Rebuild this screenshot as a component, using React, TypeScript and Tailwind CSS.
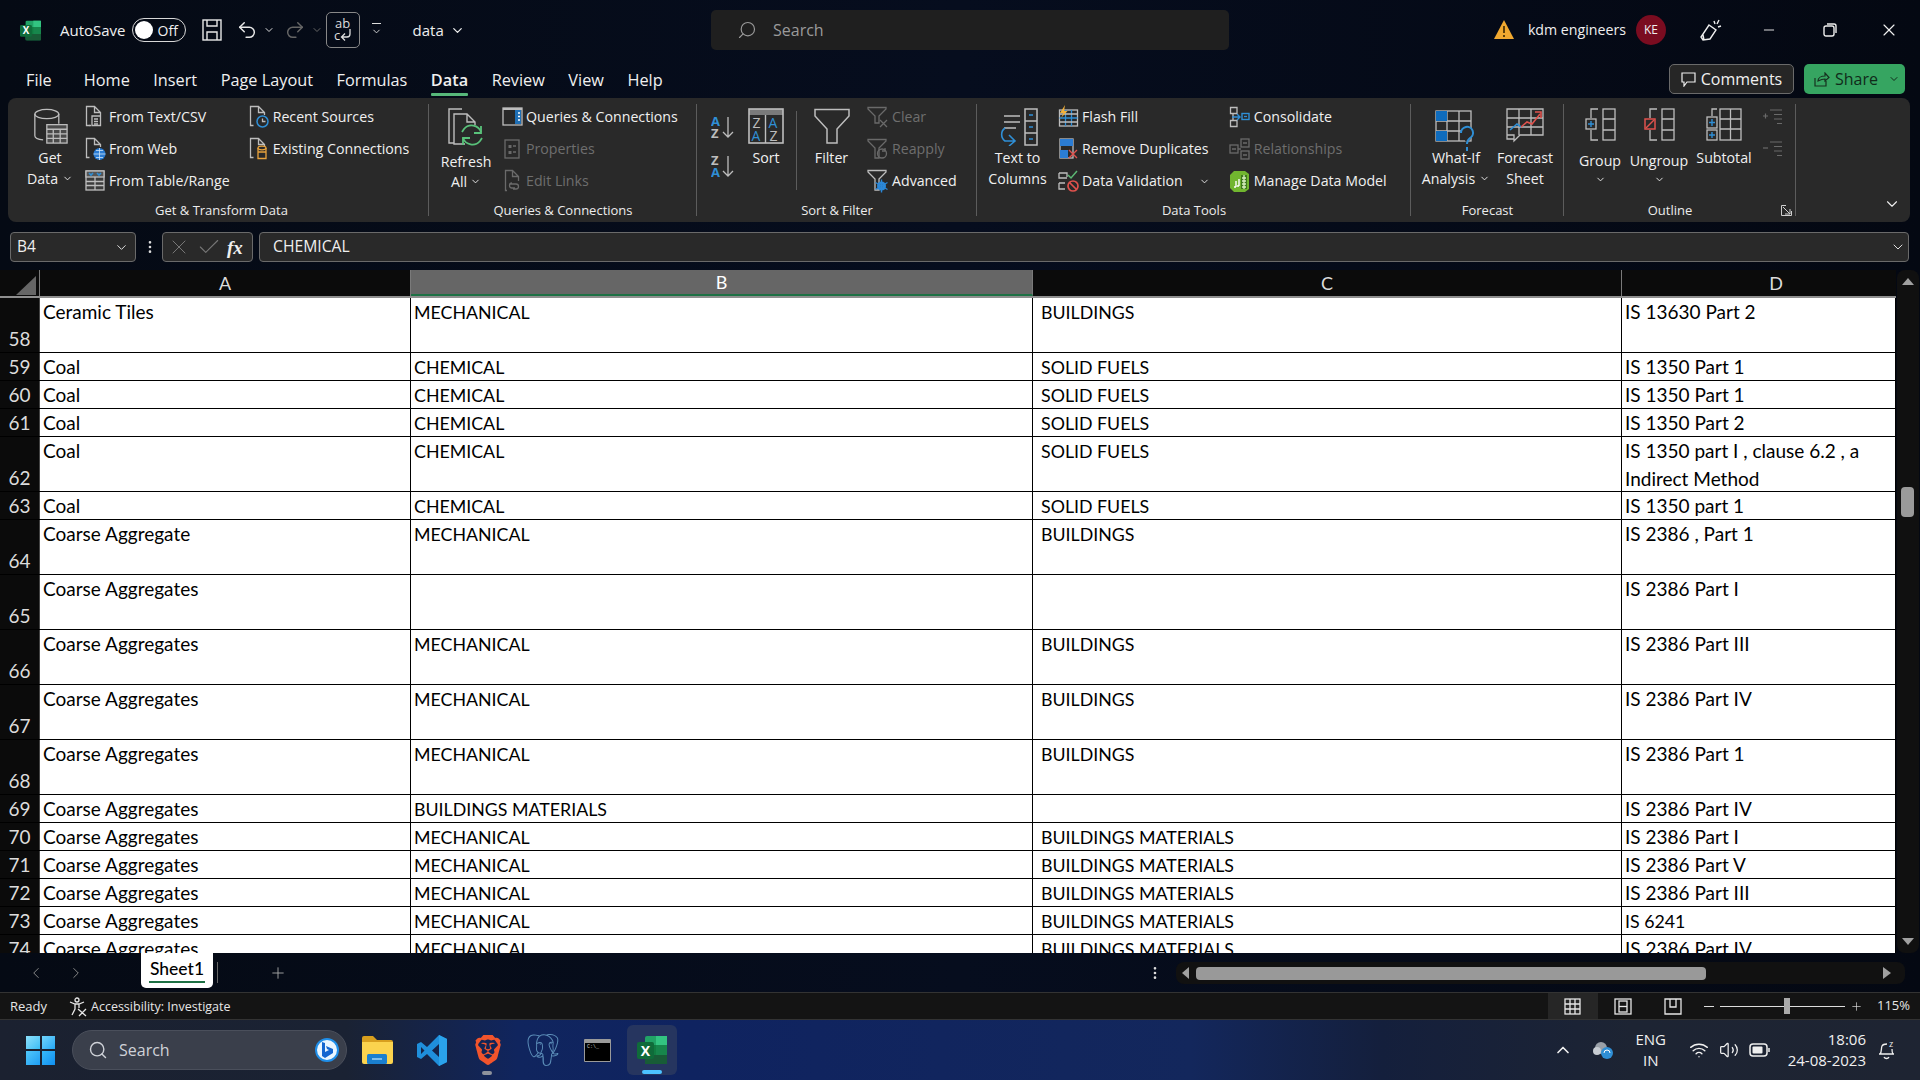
import { ChevronDown, ChevronLeft, ChevronRight, ChevronUp, EllipsisVertical, Plus, Redo2, Undo2, Wifi, Volume2, Check, X, Minus, Search } from "lucide-react";
import { SiBrave, SiPostgresql } from "react-icons/si";
import type { ReactNode } from "react";

const GR = "#bdbdbd";
const DIM = "#6a6a6a";
const BL = "#2f8fd6";

type Row = { h: number; n: number; a: string; b: string; c: string; d: string };

const rows: Row[] = [
  { h: 55, n: 58, a: "Ceramic Tiles", b: "MECHANICAL", c: "BUILDINGS", d: "IS 13630 Part 2" },
  { h: 28, n: 59, a: "Coal", b: "CHEMICAL", c: "SOLID FUELS", d: "IS 1350 Part 1" },
  { h: 28, n: 60, a: "Coal", b: "CHEMICAL", c: "SOLID FUELS", d: "IS 1350 Part 1" },
  { h: 28, n: 61, a: "Coal", b: "CHEMICAL", c: "SOLID FUELS", d: "IS 1350 Part 2" },
  { h: 55, n: 62, a: "Coal", b: "CHEMICAL", c: "SOLID FUELS", d: "IS 1350 part I , clause 6.2 , a Indirect Method" },
  { h: 28, n: 63, a: "Coal", b: "CHEMICAL", c: "SOLID FUELS", d: "IS 1350 part 1" },
  { h: 55, n: 64, a: "Coarse Aggregate", b: "MECHANICAL", c: "BUILDINGS", d: "IS 2386 , Part 1" },
  { h: 55, n: 65, a: "Coarse Aggregates", b: "", c: "", d: "IS 2386 Part I" },
  { h: 55, n: 66, a: "Coarse Aggregates", b: "MECHANICAL", c: "BUILDINGS", d: "IS 2386 Part III" },
  { h: 55, n: 67, a: "Coarse Aggregates", b: "MECHANICAL", c: "BUILDINGS", d: "IS 2386 Part IV" },
  { h: 55, n: 68, a: "Coarse Aggregates", b: "MECHANICAL", c: "BUILDINGS", d: "IS 2386 Part 1" },
  { h: 28, n: 69, a: "Coarse Aggregates", b: "BUILDINGS MATERIALS", c: "", d: "IS 2386 Part IV" },
  { h: 28, n: 70, a: "Coarse Aggregates", b: "MECHANICAL", c: "BUILDINGS MATERIALS", d: "IS 2386 Part I" },
  { h: 28, n: 71, a: "Coarse Aggregates", b: "MECHANICAL", c: "BUILDINGS MATERIALS", d: "IS 2386 Part V" },
  { h: 28, n: 72, a: "Coarse Aggregates", b: "MECHANICAL", c: "BUILDINGS MATERIALS", d: "IS 2386 Part III" },
  { h: 28, n: 73, a: "Coarse Aggregates", b: "MECHANICAL", c: "BUILDINGS MATERIALS", d: "IS 6241" },
  { h: 28, n: 74, a: "Coarse Aggregates", b: "MECHANICAL", c: "BUILDINGS MATERIALS", d: "IS 2386 Part IV" },
];

const tabs = ["File", "Home", "Insert", "Page Layout", "Formulas", "Data", "Review", "View", "Help"];

const Ico = ({ w = 22, h = 24, children }: { w?: number; h?: number; children: ReactNode }) => (
  <svg width={w} height={h} viewBox={`0 0 ${w} ${h}`} fill="none" strokeWidth="1.3" className="shrink-0">
    {children}
  </svg>
);

// page outline used by most of the small ribbon icons
const Page = ({ c = GR }: { c?: string }) => (
  <path d="M4.5 20.5H1.5V1.5H9.5L15.5 7.5V10M9.5 1.5V7.5H15.5" stroke={c} />
);

const TextCsvIcon = () => (
  <Ico><Page /><path d="M6 20.5H4M15.5 10V20.5H7V11H15.5" stroke={GR} /><path d="M9 14h4M9 16.5h4M9 19h4" stroke={GR} /></Ico>
);
const WebIcon = () => (
  <Ico><Page /><circle cx="14.5" cy="17" r="6" fill="#2b7cd3" /><path d="M8.5 17h12M14.5 11v12M11 13.5h7M11 20.5h7" stroke="#cfe4f7" strokeWidth="0.8" /></Ico>
);
const TableRangeIcon = () => (
  <Ico><rect x="1" y="2" width="18" height="19" stroke={GR} fill="#3c3c3c" /><rect x="1" y="2" width="18" height="6" fill="#555" stroke={GR} /><path d="M4 4l2 2 2-2M12 4l2 2 2-2" stroke={BL} strokeWidth="1.6" /><path d="M1 12.5h18M1 16.5h18M10 8v13" stroke={GR} /></Ico>
);
const RecentIcon = () => (
  <Ico><Page /><circle cx="13.5" cy="16.5" r="5.5" stroke={BL} strokeWidth="1.5" fill="#292929" /><path d="M13.5 13.5v3h3" stroke={GR} /></Ico>
);
const ExistingIcon = () => (
  <Ico><Page /><ellipse cx="13" cy="11" rx="4" ry="1.8" stroke="#e8a33d" /><path d="M9 11v10.5h8V11M9 15h8" stroke="#e8a33d" /></Ico>
);
const QueriesIcon = () => (
  <Ico w={21} h={22}><rect x="1" y="2" width="19" height="17" stroke={GR} /><path d="M1 3h19" stroke={GR} strokeWidth="2" /><rect x="13" y="4" width="6" height="14" fill="#1f6fb5" /><path d="M16 7h2M16 10.5h2M16 14h2" stroke="#fff" /></Ico>
);
const PropsIcon = () => (
  <Ico w={20} h={24}><rect x="3" y="3" width="14" height="18" stroke={DIM} /><path d="M6.5 8h3v3h-3zM6.5 14h3v3h-3z" fill={DIM} /><path d="M11 9h3M11 15h3" stroke={DIM} /></Ico>
);
const EditLinksIcon = () => (
  <Ico w={20} h={24}><path d="M5 21.5H3.5V1.5H10.5L16.5 7.5V12M10.5 1.5V7.5H16.5" stroke={DIM} /><path d="M8 15h6a2.5 2.5 0 0 1 0 5h-3M13 19h-3a2.5 2.5 0 0 1 0-5" stroke={DIM} /></Ico>
);
const ClearIcon = ({ c = DIM }: { c?: string }) => (
  <Ico w={21} h={22}><path d="M1 1.5H19V3L12 10V17H8V10L1 3Z" stroke={c} /><path d="M13 14l7 7M20 14l-7 7" stroke={c} /></Ico>
);
const ReapplyIcon = () => (
  <Ico w={21} h={22}><path d="M1 1.5H19V3L12 10V20H8V10L1 3Z" stroke={DIM} fill="#292929" /><circle cx="15" cy="15.5" r="4.5" stroke={DIM} /><path d="M18 10v3h-3" stroke={DIM} /></Ico>
);
const AdvancedIcon = () => (
  <Ico w={21} h={24}><path d="M1 1.5H19V3L12 10V21H8V10L1 3Z" stroke={GR} /><circle cx="14.5" cy="17" r="4.5" fill="#2b88d8" /><circle cx="14.5" cy="17" r="1.4" fill="#292929" /><path d="M14.5 10.5v13M8.5 13.5l12 7M20.5 13.5l-12 7" stroke="#2b88d8" strokeWidth="1.4" /></Ico>
);
const FlashFillIcon = () => (
  <Ico w={21} h={24}><rect x="1.5" y="5" width="18" height="16" stroke={GR} /><path d="M1.5 13h18M7.5 5v16M13.5 5v16" stroke={BL} /><path d="M1.5 9h18M1.5 17h18" stroke={GR} /><path d="M7 0L2 8h3.5L3 13l6.5-7H6Z" fill="#f2b13a" /></Ico>
);
const RemoveDupIcon = () => (
  <Ico w={21} h={24}><rect x="2" y="2" width="13" height="19" stroke={GR} /><rect x="2" y="2" width="13" height="7" fill="#2b7cd3" /><rect x="2" y="13" width="8" height="8" fill="#2b7cd3" /><path d="M11 13l8 8M19 13l-8 8" stroke="#e0524d" strokeWidth="1.4" /></Ico>
);
const ValidationIcon = () => (
  <Ico w={21} h={24}><path d="M1 4h8v4M1 4v5h8M3 4M1 14h6M1 14v6h6" stroke={GR} /><path d="M10 6l3 3 6-7" stroke="#5cb874" strokeWidth="1.5" /><circle cx="15" cy="17" r="5" stroke="#e0524d" strokeWidth="1.7" /><path d="M11.5 13.5l7 7" stroke="#e0524d" strokeWidth="1.7" /></Ico>
);
const ConsolidateIcon = () => (
  <Ico w={21} h={24}><path d="M1.5 2.5H8V8.5H1.5ZM1.5 15.5H8V21.5H1.5Z M4 8.5V15.5" stroke={GR} /><path d="M3 12h8M8 9l3 3-3 3" stroke={BL} strokeWidth="1.4" /><rect x="13" y="8.5" width="7" height="6" stroke={BL} strokeWidth="1.4" /><path d="M15 11.5h3" stroke={BL} /></Ico>
);
const RelationIcon = () => (
  <Ico w={21} h={24}><rect x="1" y="8" width="8" height="8" stroke={DIM} /><rect x="12" y="2" width="8" height="8" stroke={DIM} /><rect x="12" y="14" width="8" height="8" stroke={DIM} /><path d="M9 12h3M3 12h4M14 6h4M14 18h4" stroke={DIM} /></Ico>
);
const DataModelIcon = () => (
  <Ico w={21} h={24}>
    <path d="M1 6l4-4h11l4 3v15l-4 3H5l-4-4Z" fill="#71b62f" />
    <rect x="12" y="6" width="6" height="14" fill="#3d7a1c" />
    <path d="M13 9h4M13 12h4M13 15h4M13 18h4M15 6v14" stroke="#d9f0c0" />
    <path d="M7 12v6M5 18h2M10 10v7M8 17h2" stroke="#fff" strokeWidth="1.4" />
  </Ico>
);

const GetDataIcon = () => (
  <svg width="35" height="37" viewBox="0 0 38 40" fill="none" strokeWidth="1.4">
    <ellipse cx="15" cy="6.5" rx="13" ry="5" stroke={GR} />
    <path d="M2 6.5V30c0 2.5 3.5 4 9 4.5M28 6.5V17" stroke={GR} />
    <rect x="15" y="18" width="22" height="20" fill="#4a4a4a" stroke={GR} />
    <path d="M15 23h22M15 28h22M15 33h22M22 23v15M29.500 23v15" stroke={GR} />
  </svg>
);
const RefreshIcon = () => (
  <svg width="36" height="42" viewBox="0 0 36 42" fill="none" strokeWidth="1.4">
    <path d="M6 35H1V1H14" stroke={GR} />
    <path d="M17 36H6V6H19L27 14V17M19 6V14H27" stroke={GR} />
    <path d="M33 24a10 10 0 0 0-17-3l-2 3M15 30a10 10 0 0 0 17 3l2-3" stroke="#59c27a" strokeWidth="1.8" />
    <path d="M33 18v7h-7M15 37v-7h7" stroke="#59c27a" strokeWidth="1.8" />
  </svg>
);
const AzIcon = ({ flip }: { flip?: boolean }) => (
  <svg width="24" height="26" viewBox="0 0 24 26" fill="none">
    <text x="0" y="12" fontSize="13" fontWeight="700" fontFamily="Open Sans, sans-serif" fill={flip ? GR : BL}>{flip ? "Z" : "A"}</text>
    <text x="0" y="24" fontSize="13" fontWeight="700" fontFamily="Open Sans, sans-serif" fill={flip ? BL : GR}>{flip ? "A" : "Z"}</text>
    <path d="M17 3v20M12 18l5 5 5-5" stroke={GR} strokeWidth="1.3" />
  </svg>
);
const SortIcon = () => (
  <svg width="36" height="36" viewBox="0 0 36 36" fill="none" className="block">
    <rect x="1" y="1" width="34" height="34" stroke={GR} strokeWidth="1.6" />
    <rect x="1" y="1" width="34" height="6" fill={GR} opacity="0.55" />
    <path d="M17.500 7v28" stroke={GR} strokeWidth="1.4" />
    <text x="4.500" y="20" fontSize="14" fontFamily="Open Sans, sans-serif" fill={GR}>Z</text>
    <text x="3.500" y="33" fontSize="14" fontFamily="Open Sans, sans-serif" fill={BL}>A</text>
    <text x="20.500" y="20" fontSize="14" fontFamily="Open Sans, sans-serif" fill={BL}>A</text>
    <text x="21.500" y="33" fontSize="14" fontFamily="Open Sans, sans-serif" fill={GR}>Z</text>
  </svg>
);
const FilterIcon = () => (
  <svg width="36" height="36" viewBox="0 0 36 36" fill="none" className="block">
    <path d="M1 1.500H35V8L23 21V35H13V21L1 8Z" stroke={GR} strokeWidth="1.5" />
  </svg>
);
const TextColumnsIcon = () => (
  <svg width="42" height="38" viewBox="0 0 42 38" fill="none" className="block" strokeWidth="1.5">
    <rect x="28" y="1" width="12" height="36" stroke={GR} />
    <path d="M28 13h12M28 25h12" stroke={GR} />
    <path d="M32 7h4M32 19h4M32 31h4" stroke={BL} />
    <path d="M7 8h16M7 14h16M7 20h12" stroke={GR} />
    <path d="M8 20a8 8 0 0 0 0 13h9M12 27l6 6-6 5" stroke={BL} strokeWidth="1.6" />
  </svg>
);
const WhatIfIcon = () => (
  <svg width="42" height="42" viewBox="0 0 42 42" fill="none" className="block mt-[2px]" strokeWidth="1.3">
    <rect x="1" y="1" width="35" height="30" stroke={GR} />
    <path d="M12 1v30M24 1v30M1 11h35M1 21h35" stroke={GR} />
    <rect x="1" y="1" width="11" height="10" fill="#0f6cbd" />
    <rect x="1" y="21" width="11" height="10" fill="#0f6cbd" />
    <path d="M26 23a6 6 0 1 1 9 5c-2 1.500-3 3-3 6" stroke={BL} strokeWidth="2" fill="#292929" />
    <path d="M32 37v4" stroke={BL} strokeWidth="2" />
  </svg>
);
const ForecastIcon = () => (
  <svg width="38" height="36" viewBox="0 0 38 36" fill="none" className="block" strokeWidth="1.3">
    <path d="M8 31H1V1H37V27H14L8 33V27H1" stroke={GR} />
    <path d="M13 1v26M25 1v26M1 10h36M1 19h36" stroke={GR} />
    <path d="M4 22l7-6 4 3" stroke={BL} strokeWidth="1.6" />
    <path d="M15 19l6-5 5 2 8-10" stroke="#e0524d" strokeWidth="1.6" />
    <path d="M29 4h6v6" stroke="#e0524d" strokeWidth="1.6" />
  </svg>
);
const GroupIcon = () => (
  <svg width="31" height="33" viewBox="0 0 31 33" fill="none" className="block" strokeWidth="1.3">
    <rect x="1" y="11" width="10" height="10" stroke={GR} />
    <path d="M6 13v6M3 16h6" stroke={BL} strokeWidth="1.4" />
    <path d="M13 1H6v9M6 22v10h7" stroke={GR} />
    <rect x="18" y="1" width="12" height="31" stroke={GR} />
    <path d="M18 11h12M18 22h12" stroke={GR} />
  </svg>
);
const UngroupIcon = () => (
  <svg width="31" height="33" viewBox="0 0 31 33" fill="none" className="block" strokeWidth="1.3">
    <rect x="1" y="11" width="10" height="10" stroke="#e0524d" strokeWidth="1.5" />
    <path d="M2 20l8-8" stroke="#e0524d" strokeWidth="1.4" />
    <path d="M13 1H6v9M6 22v10h7" stroke={GR} />
    <rect x="18" y="1" width="12" height="31" stroke={GR} />
    <path d="M18 11h12M18 22h12" stroke={GR} />
  </svg>
);
const SubtotalIcon = () => (
  <svg width="36" height="33" viewBox="0 0 36 33" fill="none" className="block" strokeWidth="1.3">
    <rect x="1" y="9" width="10" height="11" stroke={GR} />
    <rect x="1" y="22" width="10" height="10" stroke={GR} />
    <path d="M6 11v7M3 14.500h6M6 24v6M3 27h6" stroke={BL} strokeWidth="1.4" />
    <path d="M11 1H6v7" stroke={GR} />
    <rect x="14" y="1" width="21" height="31" stroke={GR} />
    <path d="M24.500 1v31M14 11h21M14 21h21" stroke={GR} />
  </svg>
);
const OutlineSide = ({ minus }: { minus?: boolean }) => (
  <svg width="20" height="16" viewBox="0 0 20 16" fill="none" strokeWidth="1.2">
    <path d={minus ? "M0 7h5" : "M0 7h5M2.500 4.500v5"} stroke={DIM} />
    <path d="M7 1h12M11 5.500h8M11 10h8M14 14.500h5" stroke={DIM} />
  </svg>
);

const SaveIcon = () => (
  <svg width="20" height="22" viewBox="0 0 20 22" fill="none" stroke="#e8e8e8" strokeWidth="1.4">
    <rect x="1" y="1" width="18" height="20" />
    <path d="M5 1v6h10V1M5 21v-8h10v8" />
  </svg>
);
const SpellIcon = () => (
  <svg width="22" height="28" viewBox="0 0 22 28" fill="none">
    <text x="3" y="12" fontSize="13" fontFamily="Open Sans, sans-serif" fill="#ddd">ab</text>
    <text x="2" y="24" fontSize="13" fontFamily="Open Sans, sans-serif" fill="#ddd">c</text>
    <path d="M18 13v5a3 3 0 0 1-3 3H10M13 17.500l-3.500 3.500 3.500 3.500" stroke="#ddd" strokeWidth="1.3" />
  </svg>
);
const ExcelLogo = ({ s = 20 }: { s?: number }) => (
  <svg width={s} height={s} viewBox="0 0 30 30" className="shrink-0">
    <rect x="8" y="1" width="22" height="28" rx="2" fill="#21a366" />
    <rect x="19" y="1" width="11" height="9.500" fill="#33c481" />
    <rect x="8" y="10" width="22" height="10" fill="#107c41" />
    <rect x="19" y="10" width="11" height="10" fill="#17864c" />
    <rect x="8" y="20" width="22" height="9" fill="#185c37" />
    <rect x="0" y="7" width="17" height="17" rx="2" fill="#0f6b3a" />
    <text x="8.500" y="20.500" textAnchor="middle" fontSize="14" fontWeight="700" fontFamily="Open Sans, sans-serif" fill="#fff">X</text>
  </svg>
);
const WinLogo = () => (
  <div className="grid grid-cols-2 gap-[2px] w-[29px] h-[29px]">
    <div className="bg-gradient-to-br from-[#8be0fb] to-[#36bdf6]" />
    <div className="bg-gradient-to-br from-[#6fd4fb] to-[#1fa8f5]" />
    <div className="bg-gradient-to-br from-[#50c8fa] to-[#1c9df2]" />
    <div className="bg-gradient-to-br from-[#37b9f8] to-[#0f8ff0]" />
  </div>
);
const FolderIcon = () => (
  <svg width="31" height="28" viewBox="0 0 31 28">
    <path d="M0 2a2 2 0 0 1 2-2h9l4 4h14a2 2 0 0 1 2 2v3H0Z" fill="#d89f1e" />
    <path d="M0 6h31v20a2 2 0 0 1-2 2H2a2 2 0 0 1-2-2Z" fill="#fbd34e" />
    <rect x="5" y="18" width="20" height="10" rx="1.500" fill="#1a7fcf" />
    <path d="M10 23h10" stroke="#9fd3f7" strokeWidth="1.5" />
  </svg>
);
const VsCodeIcon = () => (
  <svg width="30" height="31" viewBox="0 0 30 31">
    <path d="M22 0l8 4v23l-8 4-12-12-6 5-4-2v-13l4-2 6 5Z M22 9l-7 6.500 7 6.500Z M4 12v7l3.500-3.500Z" fill="#1f8fdc" fillRule="evenodd" />
    <path d="M22 0l8 4v23l-8 4Z" fill="#2aa3ec" />
  </svg>
);
const TerminalIcon = () => (
  <div className="w-[27px] h-[23px] bg-black border border-[#9a9a9a] border-t-[4px] rounded-[1px] flex items-start pl-[2px] pt-[1px]">
    <span className="text-[5px] leading-[6px] text-[#ccc] font-['Liberation_Mono',monospace]">C:\_</span>
  </div>
);
const BingIcon = () => (
  <div className="w-[24px] h-[24px] rounded-full bg-[#eaf6ff] border-2 border-[#1f8ee8] flex items-center justify-center">
    <svg width="14" height="16" viewBox="0 0 14 16"><path d="M2 0l3 1v9l4-2-2-1-1-3 7 3v4L5 16l-3-2Z" fill="#1466d0" /></svg>
  </div>
);

const SmallBtn = ({ icon, label, dim, indent = 1 }: { icon: ReactNode; label: string; dim?: boolean; indent?: number }) => (
  <div className={`h-[32px] flex items-center whitespace-nowrap ${dim ? "text-[#6e6e6e]" : "text-[#f0f0f0]"}`}>
    <div className="w-[24px] flex justify-center">{icon}</div>
    <span style={{ marginLeft: indent }}>{label}</span>
  </div>
);

const Caret = ({ cls = "" }: { cls?: string }) => <ChevronDown size={11} strokeWidth={2} className={`inline-block ${cls}`} />;

const BigBtn = ({ w, ml = 0, icon, iconH = 40, lines, caret }: { w: number; ml?: number; icon: ReactNode; iconH?: number; lines: string[]; caret?: boolean }) => (
  <div className="flex flex-col items-center text-[#f0f0f0] shrink-0 pt-[10px]" style={{ width: w, marginLeft: ml }}>
    <div className="flex items-start justify-center" style={{ height: iconH }}>{icon}</div>
    {lines.map((l, i) => (
      <div key={l} className="h-[21px] leading-[21px] whitespace-nowrap">
        {l}
        {caret && i === lines.length - 1 && <Caret cls="ml-[4px] mb-[3px]" />}
      </div>
    ))}
  </div>
);

const RibbonGroup = ({ w, label, lcls = "", children, extra }: { w: number; label: string; lcls?: string; children: ReactNode; extra?: ReactNode }) => (
  <div className="relative shrink-0 flex flex-col h-full" style={{ width: w }}>
    <div className="flex h-[100px] pr-[1px]">{children}</div>
    <div className={`text-center text-[13px] leading-[18px] text-[#ececec] mt-[3px] ${lcls}`}>{label}</div>
    {extra}
    <div className="absolute right-0 top-[6px] bottom-[6px] w-px bg-[#5c5c5c]" />
  </div>
);

const SmallCol = ({ ml, children }: { ml: number; children: ReactNode }) => (
  <div className="flex flex-col pt-[3px] shrink-0" style={{ marginLeft: ml }}>{children}</div>
);

const Cell = ({ w, text, c }: { w: number; text: string; c?: boolean }) => (
  <div
    className={`shrink-0 h-full pr-[2px] leading-[28px] text-black bg-white overflow-hidden border-r border-black ${c ? "pl-[8px]" : "pl-[3px]"} ${text === text.toUpperCase() ? "text-[17.800px]" : "text-[19px]"}`}
    style={{ width: w }}
  >
    {text}
  </div>
);

const ColHead = ({ w, label, active, cls = "" }: { w: number; label: string; active?: boolean; cls?: string }) => (
  <div className={`shrink-0 h-full flex items-center justify-center border-r border-[#7a7a7a] text-[18px] ${active ? "bg-[#666666] text-white border-b-[2px] border-b-[#1e7145]" : "text-[#dcdcdc]"} ${cls}`} style={{ width: w }}>
    {label}
  </div>
);

export default function App() {
  return (
    <div className="w-[1920px] h-[1080px] overflow-hidden flex flex-col bg-gradient-to-r from-[#050a14] via-[#060d1e] to-[#040812] font-['Open_Sans',sans-serif] text-[14.200px]">
      {/* title bar */}
      <div className="h-[56px] shrink-0 relative flex items-center text-[#efefef] pt-[4px]">
        <div className="ml-[20px]"><ExcelLogo s={21} /></div>
        <span className="ml-[19px] text-[15px]">AutoSave</span>
        <div className="ml-[6px] w-[54px] h-[24px] rounded-full border border-[#d8d8d8] flex items-center px-[2px]">
          <div className="w-[18px] h-[18px] rounded-full bg-white" />
          <span className="ml-[5px] text-[14px]">Off</span>
        </div>
        <div className="ml-[16px]"><SaveIcon /></div>
        <Undo2 size={22} strokeWidth={1.6} className="ml-[14px] text-[#e8e8e8]" />
        <ChevronDown size={12} className="ml-[5px] text-[#ddd]" />
        <Redo2 size={22} strokeWidth={1.6} className="ml-[9px] text-[#666]" />
        <ChevronDown size={12} className="ml-[5px] text-[#666]" />
        <div className="ml-[3px] w-[34px] h-[36px] rounded-[5px] border border-[#888] flex items-center justify-center"><SpellIcon /></div>
        <div className="ml-[11px] flex flex-col items-center">
          <div className="w-[9px] h-px bg-[#ddd] mb-[2px]" />
          <ChevronDown size={11} className="text-[#ddd]" />
        </div>
        <span className="ml-[31px] text-[15px]">data</span>
        <ChevronDown size={15} className="ml-[6px]" />
        <div className="absolute left-[711px] top-[10px] w-[518px] h-[40px] rounded-[5px] bg-[#1f1f1f] flex items-center pl-[26px] text-[#9a9a9a]">
          <Search size={20} strokeWidth={1.4} className="-scale-x-100" />
          <span className="ml-[16px] text-[16px]">Search</span>
        </div>
        <div className="ml-auto flex items-center">
          <svg width="20" height="20" viewBox="0 0 20 20"><path d="M10 0L20 19H0Z" fill="#f0a830" /><path d="M10 6v7M10 15v2" stroke="#3a2600" strokeWidth="1.6" /></svg>
          <span className="ml-[14px] text-[14.200px] whitespace-nowrap">kdm engineers</span>
          <div className="ml-[10px] w-[30px] h-[30px] rounded-full bg-[#7a0c20] flex items-center justify-center text-[12px]">KE</div>
          <svg className="ml-[34px]" width="22" height="24" viewBox="0 0 22 24" fill="none" stroke="#eee" strokeWidth="1.4"><path d="M9 7l7 5-6 9-7 1-2-3ZM4 22l-1-5M14 3l1 3M19 2l-2 4M21 8l-3 1" /></svg>
          <Minus size={16} strokeWidth={1.4} className="ml-[39px]" />
          <svg className="ml-[46px]" width="14" height="14" viewBox="0 0 14 14" fill="none" stroke="#eee" strokeWidth="1.4"><rect x="1" y="3" width="10" height="10" rx="2" /><path d="M4 1h7a2 2 0 0 1 2 2v7" /></svg>
          <X size={20} strokeWidth={1.4} className="ml-[42px] mr-[21px]" />
        </div>
      </div>

      {/* tabs */}
      <div className="h-[42px] shrink-0 flex items-center pl-[26px] pt-[7px] relative text-[#f0f0f0] text-[16.300px]">
        {tabs.map((t) => (
          <div key={t} className={`relative ${t === "File" ? "mr-[32px]" : "mr-[23.500px]"} ${t === "Data" ? "font-semibold" : ""}`}>
            {t}
            {t === "Data" && <div className="absolute left-0 right-0 -bottom-[3px] h-[3px] bg-[#57b87a] rounded-[1px]" />}
          </div>
        ))}
        <div className="absolute left-[1669px] top-[8px] w-[125px] h-[30px] rounded-[5px] border border-[#6a6a6a] bg-[#262626] flex items-center justify-center">
          <svg width="15" height="15" viewBox="0 0 15 15" fill="none" stroke="#eee" strokeWidth="1.2"><path d="M1 1h13v9H6l-3 4v-4H1Z" /></svg>
          <span className="ml-[5px] text-[16px]">Comments</span>
        </div>
        <div className="absolute left-[1804px] top-[8px] w-[101px] h-[30px] rounded-[5px] bg-[#36a561] flex items-center text-[#102b1a] pl-[10px]">
          <svg width="16" height="15" viewBox="0 0 16 15" fill="none" stroke="#16301f" strokeWidth="1.2"><path d="M1 6v8h11V9M4 9c0-3 3-5 7-5V1l4 4.500L11 9V7c-3 0-5 1-7 2Z" /></svg>
          <span className="ml-[5px] text-[16px]">Share</span>
          <ChevronDown size={12} className="ml-auto mr-[5px]" />
        </div>
      </div>

      {/* ribbon */}
      <div className="h-[124px] shrink-0 mx-[8px] w-[1902px] rounded-[8px] bg-[#292929] flex relative">
        <RibbonGroup w={421} label="Get & Transform Data" lcls="pl-[6px]">
          <BigBtn w={84} iconH={39} icon={<GetDataIcon />} lines={["Get", "Data"]} caret />
          <SmallCol ml={-8}>
            <SmallBtn icon={<TextCsvIcon />} label="From Text/CSV" />
            <SmallBtn icon={<WebIcon />} label="From Web" />
            <SmallBtn icon={<TableRangeIcon />} label="From Table/Range" />
          </SmallCol>
          <SmallCol ml={18}>
            <SmallBtn icon={<RecentIcon />} label="Recent Sources" />
            <SmallBtn icon={<ExistingIcon />} label="Existing Connections" />
          </SmallCol>
        </RibbonGroup>
        <RibbonGroup w={268} label="Queries & Connections">
          <div className="w-[74px] shrink-0 flex flex-col items-center pt-[10px] text-[#f0f0f0]">
            <RefreshIcon />
            <div className="h-[20px] leading-[20px] mt-[2px]">Refresh</div>
            <div className="h-[20px] leading-[20px]">All<Caret cls="ml-[3px] mb-[3px]" /></div>
          </div>
          <SmallCol ml={-3}>
            <SmallBtn icon={<QueriesIcon />} label="Queries & Connections" indent={2} />
            <SmallBtn icon={<PropsIcon />} label="Properties" dim indent={2} />
            <SmallBtn icon={<EditLinksIcon />} label="Edit Links" dim indent={2} />
          </SmallCol>
        </RibbonGroup>
        <RibbonGroup w={280} label="Sort & Filter">
          <div className="ml-[14px] w-[24px] shrink-0 flex flex-col gap-[13px] pt-[16px]">
            <AzIcon />
            <AzIcon flip />
          </div>
          <BigBtn w={62} iconH={39} icon={<SortIcon />} lines={["Sort"]} />
          <div className="w-px h-[79px] mt-[13px] bg-[#5c5c5c] shrink-0 -ml-[1px]" />
          <BigBtn w={69} iconH={39} icon={<FilterIcon />} lines={["Filter"]} />
          <SmallCol ml={-1}>
            <SmallBtn icon={<ClearIcon />} label="Clear" dim indent={3} />
            <SmallBtn icon={<ReapplyIcon />} label="Reapply" dim indent={3} />
            <SmallBtn icon={<AdvancedIcon />} label="Advanced" indent={3} />
          </SmallCol>
        </RibbonGroup>
        <RibbonGroup w={434} label="Data Tools">
          <BigBtn w={81} iconH={39} icon={<TextColumnsIcon />} lines={["Text to", "Columns"]} />
          <SmallCol ml={-2}>
            <SmallBtn icon={<FlashFillIcon />} label="Flash Fill" indent={2} />
            <SmallBtn icon={<RemoveDupIcon />} label="Remove Duplicates" indent={2} />
            <div className="flex items-center">
              <SmallBtn icon={<ValidationIcon />} label="Data Validation" indent={2} />
              <Caret cls="ml-[16px] text-[#eee]" />
            </div>
          </SmallCol>
          <SmallCol ml={18}>
            <SmallBtn icon={<ConsolidateIcon />} label="Consolidate" indent={2} />
            <SmallBtn icon={<RelationIcon />} label="Relationships" dim indent={2} />
            <SmallBtn icon={<DataModelIcon />} label="Manage Data Model" indent={2} />
          </SmallCol>
        </RibbonGroup>
        <RibbonGroup w={153} label="Forecast">
          <BigBtn w={70} ml={10} iconH={39} icon={<WhatIfIcon />} lines={["What-If", "Analysis"]} caret />
          <BigBtn w={68} iconH={39} icon={<ForecastIcon />} lines={["Forecast", "Sheet"]} />
        </RibbonGroup>
        <RibbonGroup
          w={232}
          label="Outline"
          lcls="pr-[20px]"
          extra={
            <svg className="absolute right-[4px] bottom-[6px]" width="11" height="11" viewBox="0 0 11 11" fill="none" stroke="#cfcfcf"><path d="M5 .5H.5V10.500h10V6M2 2l7 7M9 4v5H4" /></svg>
          }
        >
          <div className="flex flex-col items-center w-[72px] pt-[10px] text-[#f0f0f0] shrink-0">
            <GroupIcon />
            <div className="mt-[10px] h-[20px] leading-[20px]">Group</div>
            <Caret cls="mt-[3px]" />
          </div>
          <div className="flex flex-col items-center w-[60px] -ml-[7px] pt-[10px] text-[#f0f0f0] shrink-0">
            <UngroupIcon />
            <div className="mt-[10px] h-[20px] leading-[20px]">Ungroup</div>
            <Caret cls="mt-[3px]" />
          </div>
          <div className="flex flex-col items-center w-[62px] ml-[4px] pt-[10px] text-[#f0f0f0] shrink-0">
            <SubtotalIcon />
            <div className="mt-[7px] h-[20px] leading-[20px]">Subtotal</div>
          </div>
          <div className="ml-[8px] flex flex-col gap-[16px] pt-[11px]">
            <OutlineSide />
            <OutlineSide minus />
          </div>
        </RibbonGroup>
        <ChevronDown size={18} strokeWidth={1.5} className="absolute right-[9px] bottom-[9px] text-[#eee]" />
      </div>

      {/* formula bar */}
      <div className="h-[30px] mt-[10px] mb-[8px] shrink-0 flex items-center ml-[10px] w-[1899px] text-[#efefef]">
        <div className="w-[126px] h-full rounded-[4px] border border-[#6a6a6a] bg-[#292929] flex items-center pl-[6px] text-[15.500px]">
          B4
          <ChevronDown size={15} strokeWidth={1.6} className="ml-auto mr-[6px] text-[#ddd]" />
        </div>
        <EllipsisVertical size={16} className="ml-[6px] text-[#ddd]" />
        <div className="ml-[4px] w-[91px] h-full rounded-[4px] border border-[#6a6a6a] bg-[#292929] flex items-center pl-[4px]">
          <X size={24} strokeWidth={1} className="text-[#777]" />
          <Check size={26} strokeWidth={1} className="ml-[5px] text-[#777]" />
          <span className="ml-[5px] font-['Liberation_Serif',serif] italic font-bold text-[19px] leading-none">fx</span>
        </div>
        <div className="ml-[6px] flex-1 h-full rounded-[4px] border border-[#6a6a6a] bg-[#292929] flex items-center pl-[13px] text-[15.700px]">
          CHEMICAL
          <ChevronDown size={16} strokeWidth={1.5} className="ml-auto mr-[2px] text-[#ddd]" />
        </div>
      </div>

      {/* sheet */}
      <div className="h-[683px] shrink-0 flex font-['Lato',sans-serif] text-[18px] relative">
        <div className="w-[1896px] shrink-0 flex flex-col overflow-hidden">
          <div className="h-[28px] shrink-0 flex bg-[#0b0b0b] border-b-[2px] border-[#8f8f8f]">
            <div className="w-[40px] shrink-0 h-full flex items-end justify-end pr-[3px] pb-[1px] border-r border-[#7a7a7a]">
              <div className="w-0 h-0 border-l-[20px] border-l-transparent border-b-[19px] border-b-[#666]" />
            </div>
            <ColHead w={371} label="A" />
            <ColHead w={622} label="B" active />
            <ColHead w={589} label="C" />
            <ColHead w={274} label="D" cls="pl-[34px] border-r-0" />
          </div>
          {rows.map((r) => (
            <div key={r.n} className="shrink-0 flex border-b border-black box-border" style={{ height: r.h }}>
              <div className="w-[40px] shrink-0 h-full bg-[#0b0b0b] text-[#dcdcdc] text-[19px] flex items-end justify-center leading-[27px] border-r border-[#444]">{r.n}</div>
              <Cell w={371} text={r.a} />
              <Cell w={622} text={r.b} />
              <Cell w={589} text={r.c} c />
              <Cell w={274} text={r.d} />
            </div>
          ))}
        </div>
        <div className="w-[22px] ml-[1px] h-full bg-[#101010] rounded-[8px] flex flex-col items-center justify-between py-[8px] relative">
          <div className="w-0 h-0 border-x-[6px] border-x-transparent border-b-[7px] border-b-[#a0a0a0]" />
          <div className="absolute left-[4px] top-[217px] w-[13px] h-[30px] rounded-[4px] bg-[#9a9a9a]" />
          <div className="w-0 h-0 border-x-[6px] border-x-transparent border-t-[7px] border-t-[#a0a0a0]" />
        </div>
      </div>

      {/* sheet tabs */}
      <div className="h-[40px] shrink-0 flex relative text-[#ddd] border-b border-[#333]">
        <ChevronLeft size={18} strokeWidth={1.3} className="absolute left-[27px] top-[11px] text-[#8a8a8a]" />
        <ChevronRight size={18} strokeWidth={1.3} className="absolute left-[67px] top-[11px] text-[#8a8a8a]" />
        <div className="ml-[141px] w-[72px] h-[35px] bg-white rounded-b-[5px] flex flex-col items-center pt-[4px] text-black">
          <span className="border-b-2 border-[#1e7145] leading-[24px] px-[1px] font-['Lato',sans-serif] text-[17.500px] font-medium">Sheet1</span>
        </div>
        <div className="ml-[4px] mt-[9px] w-px h-[21px] bg-[#666]" />
        <Plus size={18} strokeWidth={1.2} className="absolute left-[269px] top-[11px] text-[#aaa]" />
        <EllipsisVertical size={16} className="absolute left-[1147px] top-[12px]" />
        <div className="absolute left-[1176px] top-[9px] w-[729px] h-[22px] rounded-[8px] bg-[#111] flex items-center px-[6px]">
          <div className="w-0 h-0 border-y-[6px] border-y-transparent border-r-[7px] border-r-[#a0a0a0]" />
          <div className="ml-[7px] w-[510px] h-[13px] rounded-[4px] bg-[#999]" />
          <div className="ml-auto mr-[8px] w-0 h-0 border-y-[6px] border-y-transparent border-l-[8px] border-l-[#a0a0a0]" />
        </div>
      </div>

      {/* status bar */}
      <div className="h-[27px] shrink-0 bg-[#141414] flex items-center text-[13px] text-[#e6e6e6] border-b border-[#333]">
        <span className="ml-[10px] mt-[2px]">Ready</span>
        <svg className="ml-[22px] mt-[1px]" width="18" height="20" viewBox="0 0 18 20" fill="none" stroke="#e6e6e6" strokeWidth="1.3"><circle cx="8" cy="3" r="2" /><path d="M1 5l5 2h4l5-2M6 7v5l-3 6M10 7v4M9 12l8 7M17 12l-7 7" /></svg>
        <span className="ml-[4px] mt-[2px] text-[12.500px]">Accessibility: Investigate</span>
        <div className="ml-auto flex items-center h-full">
          <div className="w-[50px] h-full bg-[#262626] flex items-center justify-center">
            <svg width="17" height="17" viewBox="0 0 17 17" fill="none" stroke="#e6e6e6" strokeWidth="1.3"><rect x="1" y="1" width="15" height="15" /><path d="M6 1v15M11 1v15M1 6h15M1 11h15" /></svg>
          </div>
          <div className="w-[50px] h-full flex items-center justify-center">
            <svg width="18" height="17" viewBox="0 0 18 17" fill="none" stroke="#e6e6e6" strokeWidth="1.3"><rect x="1" y="1" width="16" height="15" /><rect x="5" y="3" width="8" height="11" /><path d="M5 8.500h8" /></svg>
          </div>
          <div className="w-[50px] h-full flex items-center justify-center">
            <svg width="18" height="17" viewBox="0 0 18 17" fill="none" stroke="#e6e6e6" strokeWidth="1.3"><path d="M1 1h16v15H1ZM6 1v8h6V1" /></svg>
          </div>
          <div className="ml-[6px] w-[10px] h-px bg-[#ddd]" />
          <div className="ml-[6px] w-[125px] h-px bg-[#ddd] relative">
            <div className="absolute left-[64px] -top-[8px] w-[6px] h-[16px] bg-[#aaa]" />
          </div>
          <Plus size={13} strokeWidth={1.2} className="ml-[5px]" />
          <span className="ml-[14px] mr-[10px]">115%</span>
        </div>
      </div>

      {/* taskbar */}
      <div className="h-[60px] shrink-0 relative flex items-center bg-[linear-gradient(90deg,#1b2130_0%,#1a2233_18%,#10255e_27%,#0f2360_36%,#13275c_62%,#141f3c_72%,#1d2433_85%,#1e2432_100%)] text-[#f0f0f0]">
        <div className="ml-[26px]"><WinLogo /></div>
        <div className="ml-[17px] w-[275px] h-[40px] rounded-full bg-[#3a3f4b] border border-[#4a4f5b] flex items-center pl-[15px] text-[#cfd2d8] text-[16px] relative">
          <Search size={20} strokeWidth={1.7} />
          <span className="ml-[11px]">Search</span>
          <div className="absolute right-[7px] top-[7px]"><BingIcon /></div>
        </div>
        <div className="ml-[15px]"><FolderIcon /></div>
        <div className="ml-[24px]"><VsCodeIcon /></div>
        <div className="ml-[26px] relative">
          <SiBrave size={30} color="#f1542c" />
          <div className="absolute left-[9px] top-[36px] w-[10px] h-[4px] rounded-full bg-[#8d929c]" />
        </div>
        <div className="ml-[24px]"><SiPostgresql size={32} color="#5b8db8" /></div>
        <div className="ml-[25px]"><TerminalIcon /></div>
        <div className="ml-[16px] w-[50px] h-[50px] rounded-[6px] bg-[#26355f] flex items-center justify-center relative">
          <ExcelLogo s={30} />
          <div className="absolute left-[15px] bottom-[1px] w-[20px] h-[4px] rounded-full bg-[#4cc2ff]" />
        </div>
        <div className="ml-auto flex items-center">
          <ChevronUp size={20} strokeWidth={2} />
          <svg className="ml-[19px]" width="22" height="20" viewBox="0 0 22 20"><circle cx="9" cy="8" r="6" fill="#9aa0a8" /><circle cx="5" cy="11" r="4" fill="#c7ccd2" /><circle cx="15" cy="13" r="6" fill="#2f8fd6" /><path d="M12 13a3 3 0 0 1 6 0" stroke="#fff" fill="none" /></svg>
          <div className="ml-[17px] w-[40px] text-center text-[15px] leading-[21px]">ENG<br />IN</div>
          <Wifi size={20} strokeWidth={1.7} className="ml-[18px]" />
          <Volume2 size={20} strokeWidth={1.5} className="ml-[10px]" />
          <svg className="ml-[10px]" width="21" height="14" viewBox="0 0 21 14" fill="none" stroke="#eee" strokeWidth="1.5"><rect x="1" y="1" width="17" height="12" rx="3" /><rect x="3.500" y="3.500" width="10" height="7" rx="1" fill="#eee" stroke="none" /><path d="M20 5v4" /></svg>
          <div className="ml-[18px] text-right text-[15px] leading-[21px] whitespace-nowrap">18:06<br />24-08-2023</div>
          <svg className="ml-[12px] mr-[24px]" width="18" height="22" viewBox="0 0 18 22" fill="none" stroke="#eee" strokeWidth="1.3"><path d="M2 15c2-2 1-6 2-8s3-2 5-2M15 15c-1-1-1-3-1-5M1 15h15M6 18c1 2 4 2 5 0" /><text x="11" y="8" fontSize="9" fill="#eee" stroke="none" fontFamily="Open Sans, sans-serif">z</text></svg>
        </div>
      </div>
    </div>
  );
}
